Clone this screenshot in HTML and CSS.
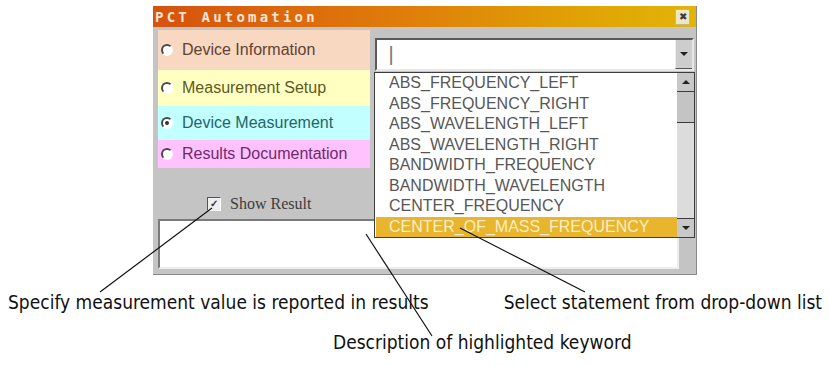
FILE: index.html
```html
<!DOCTYPE html>
<html lang="en">
<head>
  <meta charset="UTF-8">
  <title>PCT Automation</title>
  <link rel="stylesheet" href="styles.css">
</head>
<body>
  <div class="page">
    <div class="window">
      <div class="titlebar">
        <span class="title">PCT Automation</span>
        <span class="close">&#10006;</span>
      </div>
      <div class="content">
        <div class="top">
          <div class="sections">
            <div class="section s-info"><span class="radio"></span>Device Information</div>
            <div class="section s-setup"><span class="radio"></span>Measurement Setup</div>
            <div class="section s-meas"><span class="radio checked"></span>Device Measurement</div>
            <div class="section s-docs"><span class="radio"></span>Results Documentation</div>
          </div>
          <div class="combo-area">
            <div class="combo">
              <span class="caret">|</span>
              <span class="drop-btn"><span class="arrow-down"></span></span>
            </div>
          </div>
        </div>
        <div class="show-result">
          <span class="checkbox">&#10003;</span>
          <span class="show-label">Show Result</span>
        </div>
        <div class="desc-box"></div>
      </div>

      <div class="dropdown">
        <ul class="items">
          <li>ABS_FREQUENCY_LEFT</li>
          <li>ABS_FREQUENCY_RIGHT</li>
          <li>ABS_WAVELENGTH_LEFT</li>
          <li>ABS_WAVELENGTH_RIGHT</li>
          <li>BANDWIDTH_FREQUENCY</li>
          <li>BANDWIDTH_WAVELENGTH</li>
          <li>CENTER_FREQUENCY</li>
          <li class="selected">CENTER_OF_MASS_FREQUENCY</li>
        </ul>
        <div class="scrollbar">
          <span class="sb-btn"><span class="arrow-up"></span></span>
          <span class="sb-thumb"></span>
          <span class="sb-track"></span>
          <span class="sb-btn"><span class="arrow-down"></span></span>
        </div>
      </div>
    </div>

    <div class="callouts">
      <span>Specify measurement value is reported in results</span>
      <span>Select statement from drop-down list</span>
    </div>
    <div class="callout-desc">Description of highlighted keyword</div>

    <!-- leader lines from the labels to the dialog -->
    <svg class="leaders" width="830" height="366">
      <line x1="212" y1="208" x2="100" y2="292" />
      <line x1="460" y1="228" x2="585" y2="292" />
      <line x1="366" y1="234" x2="432" y2="336" />
    </svg>
  </div>
</body>
</html>
```

FILE: styles.css
```css
body {
  margin: 0;
  background: #fff;
  font-family: "Liberation Sans", Arial, sans-serif;
}
.page {
  position: relative;
  width: 830px;
  height: 366px;
  overflow: hidden;
}

/* dialog */
.window {
  position: relative;
  width: 544px;
  height: 269px;
  margin: 6px 0 0 153px;
  background: #c4c4c4;
  box-sizing: border-box;
  border-right: 1px solid #8a8a8a;
  border-bottom: 1px solid #8a8a8a;
}
.titlebar {
  height: 21px;
  display: flex;
  align-items: center;
  justify-content: space-between;
  padding: 0 6px 0 2px;
  background: linear-gradient(to right, #d6520e, #df7c0a 45%, #e0a405 80%, #e2b408);
}
.title {
  font-family: "DejaVu Sans Mono", monospace;
  font-weight: bold;
  font-size: 14px;
  letter-spacing: 3.2px;
  color: #fbe3d6;
}
.close {
  width: 15px;
  height: 16px;
  background: #efe6c4;
  border: 1px solid #c9b77a;
  box-sizing: border-box;
  font-size: 10px;
  line-height: 14px;
  text-align: center;
  color: #3a3a3a;
}
.content {
  padding: 3px 2px 0 5px;
}
.top {
  display: flex;
  gap: 5px;
}

/* left column */
.sections {
  width: 212px;
}
.section {
  display: flex;
  align-items: center;
  padding-left: 3px;
  font-size: 16px;
}
.s-info { height: 40px; background: #f9d8c2; color: #5e4234; }
.s-setup { height: 36px; background: #ffffc2; color: #5c5a22; }
.s-meas { height: 34px; background: #c2ffff; color: #23666a; }
.s-docs { height: 28px; background: #ffc2ff; color: #6e2a6e; }
.radio {
  width: 12px;
  height: 12px;
  margin-right: 9px;
  border-radius: 50%;
  background: #fff;
  border: 2px solid;
  border-color: #4a4a4a #fff #fff #4a4a4a;
  box-sizing: border-box;
  position: relative;
}
.radio.checked::after {
  content: "";
  position: absolute;
  left: 2px;
  top: 2px;
  width: 4px;
  height: 4px;
  border-radius: 50%;
  background: #333;
}

/* combo */
.combo-area {
  padding-top: 8px;
  width: 320px;
}
.combo {
  height: 33px;
  display: flex;
  align-items: center;
  justify-content: space-between;
  background: #fff;
  border: 2px solid;
  border-color: #5a5a5a #e8e8e8 #e8e8e8 #5a5a5a;
  box-sizing: border-box;
}
.caret {
  margin-left: 12px;
  font-size: 20px;
  font-weight: 300;
  color: #777;
}
.drop-btn {
  width: 17px;
  height: 29px;
  display: flex;
  align-items: center;
  justify-content: center;
  background: #cdcdcd;
  border-left: 1px solid #eee;
  border-bottom: 1px solid #555;
  box-sizing: border-box;
}
.arrow-down, .arrow-up {
  width: 0;
  height: 0;
  border-left: 4px solid transparent;
  border-right: 4px solid transparent;
}
.arrow-down { border-top: 4px solid #222; }
.arrow-up { border-bottom: 4px solid #222; }

/* show result + description */
.show-result {
  height: 51px;
  display: flex;
  align-items: flex-end;
  padding: 0 0 6px 49px;
  box-sizing: border-box;
}
.checkbox {
  width: 12px;
  height: 12px;
  margin: 0 9px 2px 0;
  background: #eee;
  border: 1px solid;
  border-color: #555 #fff #fff #555;
  font-size: 10px;
  line-height: 12px;
  text-align: center;
  font-weight: bold;
  color: #333;
}
.show-label {
  font-family: "Liberation Serif", serif;
  font-size: 16px;
  line-height: 18px;
  color: #3d3d3d;
}
.desc-box {
  width: 521px;
  height: 50px;
  background: #fff;
  border: 2px solid;
  border-color: #7a7a7a #eee #eee #7a7a7a;
  box-sizing: border-box;
}

/* open drop-down list, over the description box */
.dropdown {
  position: absolute;
  left: 221px;
  top: 66px;
  width: 321px;
  height: 166px;
  display: flex;
  background: #fff;
  border: 1px solid #3c3c3c;
  box-sizing: border-box;
}
.items {
  flex: 1;
  list-style: none;
  margin: 0;
  padding: 0 0 0 1px;
}
.items li {
  height: 20.5px;
  line-height: 20.5px;
  padding-left: 13px;
  font-size: 16px;
  color: #575757;
}
.items li.selected {
  background: #e9b52c;
  color: #fbeec6;
}
.scrollbar {
  width: 17px;
  display: flex;
  flex-direction: column;
  background: #dcdcdc;
}
.sb-btn {
  height: 19px;
  display: flex;
  align-items: center;
  justify-content: center;
  background: #c8c8c8;
  border-bottom: 1px solid #3c3c3c;
  box-sizing: border-box;
}
.sb-btn:last-child {
  border-bottom: none;
  border-top: 1px solid #3c3c3c;
}
.sb-thumb {
  height: 30px;
  background: #c4c4c4;
  border-bottom: 1px solid #3c3c3c;
}
.sb-track {
  flex: 1;
}

/* annotations */
.callouts {
  display: flex;
  justify-content: space-between;
  padding: 16px 8px 0 8px;
  font-family: "DejaVu Sans Condensed", sans-serif;
  font-size: 19px;
  color: #111;
}
.callout-desc {
  margin: 18px 0 0 333px;
  font-family: "DejaVu Sans Condensed", sans-serif;
  font-size: 19px;
  color: #111;
}
.leaders {
  position: absolute;
  left: 0;
  top: 0;
}
.leaders line {
  stroke: #111;
  stroke-width: 1.2;
}
```
